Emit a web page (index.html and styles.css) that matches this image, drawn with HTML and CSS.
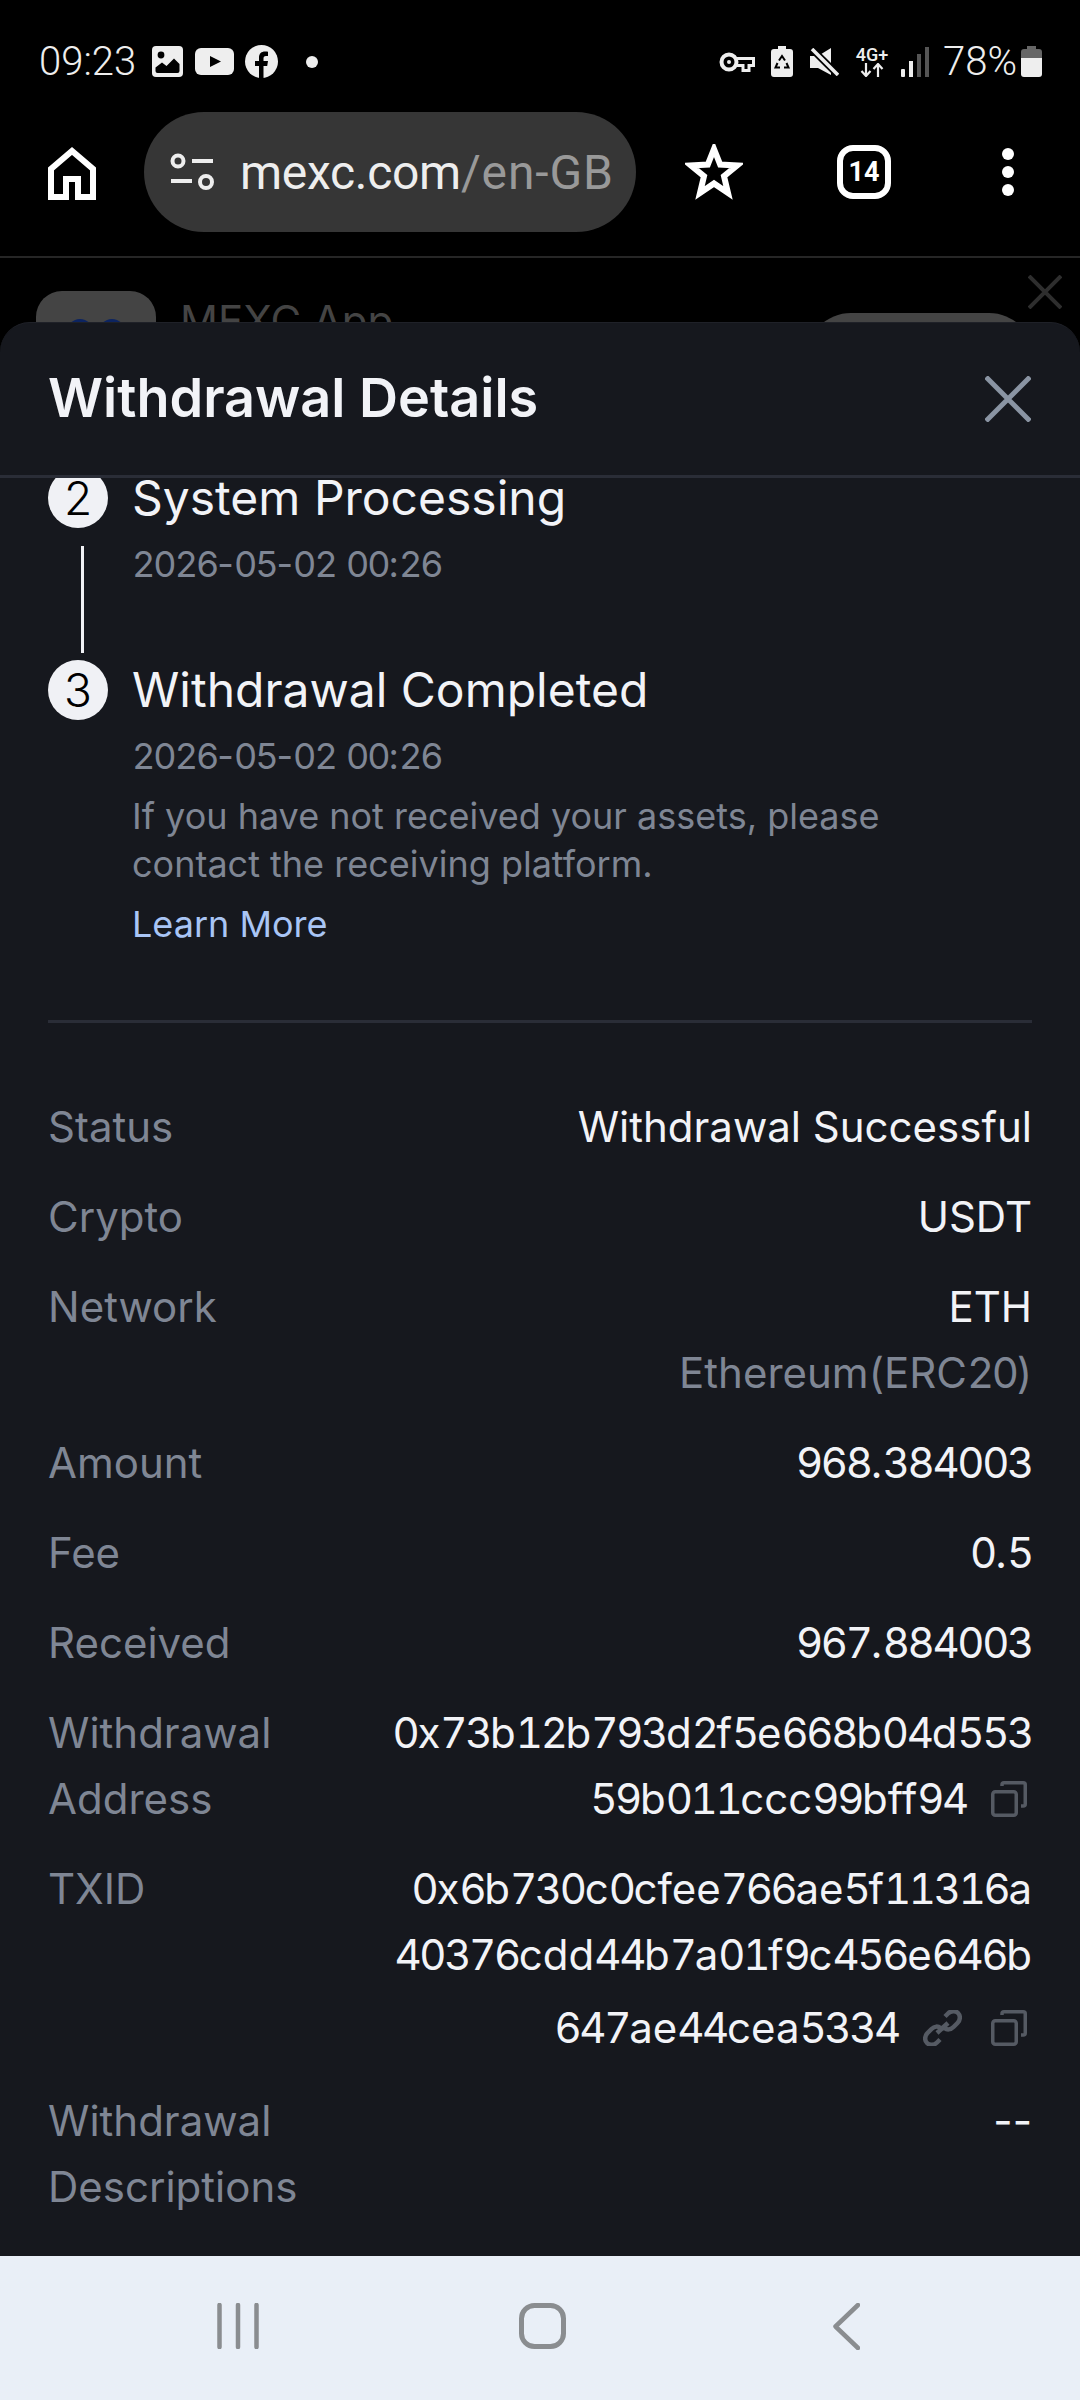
FILE: index.html
```html
<!DOCTYPE html>
<html lang="en-GB">
<head>
<meta charset="utf-8">
<title>Withdrawal Details</title>
<link rel="stylesheet" href="styles.css">
</head>
<body>
<div class="screen">
  <div class="status">
    <div class="status-left">
      <span class="clock">09:23</span>
      <svg class="ic-photo" viewBox="0 0 31 31"><rect width="31" height="31" rx="4" fill="#eee"/><circle cx="9" cy="9" r="3.400" fill="#000"/><path d="M3.500 21.500 10 16.500l4.500 3.500L22 12.500l5.500 5.500V25a2 2 0 0 1-2 2H5.500a2 2 0 0 1-2-2z" fill="#000"/></svg>
      <svg class="ic-yt" viewBox="0 0 39 27"><rect width="39" height="27" rx="6" fill="#eee"/><path d="M15 8 26 13.500 15 19z" fill="#000"/></svg>
      <svg class="ic-fb" viewBox="0 0 33 33"><circle cx="16.500" cy="16.500" r="16.500" fill="#eee"/><path d="M14 33V21H10v-5h4v-3.500C14 8.500 16.500 6.500 20 6.500c1.500 0 3 .2 3 .2v4.300h-2c-2 0-2.500 1.200-2.500 2.300V16H23l-.8 5h-3.700v12z" fill="#000"/></svg>
      <span class="note-dot"></span>
    </div>
    <div class="status-right">
      <svg class="ic-key" viewBox="0 0 36 20"><circle cx="10" cy="10" r="7.500" fill="none" stroke="#eee" stroke-width="4"/><circle cx="10" cy="10" r="2" fill="#eee"/><path d="M17 6.500h17.500v7H30v5h-6v-5h-7" fill="none" stroke="#eee" stroke-width="3"/></svg>
      <svg class="ic-recycle" viewBox="0 0 22 31"><path d="M7 0h8v3h4a3 3 0 0 1 3 3v22a3 3 0 0 1-3 3H3a3 3 0 0 1-3-3V6a3 3 0 0 1 3-3h4z" fill="#eee"/><path d="M8 14.500 11 10l3 4.500M15.500 17l2 4.500h-4.500M9 21.500H4.500l2-4.500" fill="none" stroke="#000" stroke-width="2"/></svg>
      <svg class="ic-mute" viewBox="0 0 29 28"><path d="M0 8h8L21 0v27L8 20H0z" fill="#eee"/><path d="M1 0 29 28" stroke="#000" stroke-width="7"/><path d="M2 1 28 27" stroke="#eee" stroke-width="3.500"/></svg>
      <div class="net">
        <span class="net-label">4G+</span>
        <svg class="ic-arrows" viewBox="0 0 24 14"><path d="M6 0v12M1.500 8 6 13l4.500-5M18 14V2M13.500 6 18 1l4.500 5" fill="none" stroke="#eee" stroke-width="2.200"/></svg>
      </div>
      <svg class="ic-signal" viewBox="0 0 28 30"><rect x="0" y="22" width="4" height="8" rx="1" fill="#eee"/><rect x="8" y="14" width="4" height="16" fill="#eee"/><rect x="16" y="7" width="4" height="23" fill="#555"/><rect x="24" y="0" width="4" height="30" fill="#555"/></svg>
      <span class="pct">78%</span>
      <svg class="ic-batt" viewBox="0 0 21 31"><path d="M6 0h9v3h3a3 3 0 0 1 3 3v6H0V6a3 3 0 0 1 3-3h3z" fill="#666"/><path d="M0 12h21v16a3 3 0 0 1-3 3H3a3 3 0 0 1-3-3z" fill="#eee"/></svg>
    </div>
  </div>

  <div class="toolbar">
    <svg class="ic-home" viewBox="0 0 48 54"><path d="M3 51V23L24 5l21 18v28H30V33H18v18z" fill="none" stroke="#fff" stroke-width="6"/></svg>
    <div class="url">
      <svg class="ic-tune" viewBox="0 0 44 38"><circle cx="8" cy="8" r="5.500" fill="none" stroke="#eee" stroke-width="4"/><path d="M22 8h21M1 28h21" stroke="#eee" stroke-width="4"/><circle cx="36" cy="29" r="6" fill="none" stroke="#eee" stroke-width="4"/></svg>
      <span class="url-text">mexc.com<span class="url-path">/en-GB</span></span>
    </div>
    <svg class="ic-star" viewBox="-29 -29 58 58"><path d="M0-24 6.200-8.500 23-7.500 10 3.200 14 20 0 10.500-14 20-10 3.200-23-7.500-6.200-8.500z" fill="none" stroke="#fff" stroke-width="6"/></svg>
    <div class="tabs">14</div>
    <div class="menu"><span></span><span></span><span></span></div>
  </div>

  <div class="web">
    <div class="banner">
      <div class="app-icon"><span></span><span></span></div>
      <div class="app-name">MEXC App</div>
      <div class="app-btn"></div>
    </div>
    <svg class="banner-close" viewBox="0 0 34 34"><path d="M1 1 33 33M33 1 1 33" stroke="#2e2e2e" stroke-width="4"/></svg>

    <section class="sheet">
      <header class="sheet-head">
        <h1 class="sheet-title">Withdrawal Details</h1>
        <svg class="ic-close" viewBox="0 0 46 46"><path d="M1 1 45 45M45 1 1 45" stroke="#8a94a3" stroke-width="5"/></svg>
      </header>
      <div class="sheet-body">
        <div class="step">
          <div class="step-rail">
            <div class="step-num">2</div>
            <div class="step-line"></div>
          </div>
          <div class="step-main">
            <div class="step-title">System Processing</div>
            <div class="step-note step-date"><span class="d">2026</span>-<span class="d">05</span>-<span class="d">02</span> <span class="d">00</span>:<span class="d">26</span></div>
          </div>
        </div>
        <div class="step">
          <div class="step-rail">
            <div class="step-num">3</div>
          </div>
          <div class="step-main">
            <div class="step-title">Withdrawal Completed</div>
            <div class="step-note step-date"><span class="d">2026</span>-<span class="d">05</span>-<span class="d">02</span> <span class="d">00</span>:<span class="d">26</span></div>
            <div class="step-note step-desc">If you have not received your assets, please<br>contact the receiving platform.</div>
            <div class="step-note step-link">Learn More</div>
          </div>
        </div>
        <div class="divider"></div>
        <div class="rows">
          <div class="row"><div class="label">Status</div><div class="value">Withdrawal Successful</div></div>
          <div class="row"><div class="label">Crypto</div><div class="value">USDT</div></div>
          <div class="row"><div class="label">Network</div><div class="value">ETH<div class="muted">Ethereum(ERC<span class="d">20</span>)</div></div></div>
          <div class="row"><div class="label">Amount</div><div class="value"><span class="d">968</span>.<span class="d">384003</span></div></div>
          <div class="row"><div class="label">Fee</div><div class="value"><span class="d">0</span>.<span class="d">5</span></div></div>
          <div class="row"><div class="label">Received</div><div class="value"><span class="d">967</span>.<span class="d">884003</span></div></div>
          <div class="row">
            <div class="label">Withdrawal Address</div>
            <div class="value">
              <div><span class="d">0</span>x<span class="d">73</span>b<span class="d">12</span>b<span class="d">793</span>d<span class="d">2</span>f<span class="d">5</span>e<span class="d">668</span>b<span class="d">04</span>d<span class="d">553</span></div>
              <div class="hash-end"><span><span class="d">59</span>b<span class="d">011</span>ccc<span class="d">99</span>bff<span class="d">94</span></span>
                <svg class="ic-copy" viewBox="0 0 36 36"><rect x="1.750" y="10.750" width="23.500" height="23.500" rx="2.500" fill="none" stroke="#555a63" stroke-width="3.500"/><path d="M11 5V3.750a2 2 0 0 1 2-2h19.250a2 2 0 0 1 2 2V23a2 2 0 0 1-2 2H30" fill="none" stroke="#555a63" stroke-width="3.500"/></svg>
              </div>
            </div>
          </div>
          <div class="row">
            <div class="label">TXID</div>
            <div class="value">
              <div><span class="d">0</span>x<span class="d">6</span>b<span class="d">730</span>c<span class="d">0</span>cfee<span class="d">766</span>ae<span class="d">5</span>f<span class="d">11316</span>a</div>
              <div><span class="d">40376</span>cdd<span class="d">44</span>b<span class="d">7</span>a<span class="d">01</span>f<span class="d">9</span>c<span class="d">456</span>e<span class="d">646</span>b</div>
              <div class="hash-end hash-last"><span><span class="d">647</span>ae<span class="d">44</span>cea<span class="d">5334</span></span>
                <svg class="ic-link" viewBox="0 0 39 36"><path d="M17 29.500l-3 3c-3 3-7.500 3-10 .5s-2.500-7 .5-10l4-4c3-3 6.500-3 9-1M22 6.500l3-3c3-3 7.500-3 10-.5s2.500 7-.5 10l-4 4c-3 3-6.500 3-9 1M14 23 25 13" fill="none" stroke="#555a63" stroke-width="4.500"/></svg>
                <svg class="ic-copy" viewBox="0 0 36 36"><rect x="1.750" y="10.750" width="23.500" height="23.500" rx="2.500" fill="none" stroke="#555a63" stroke-width="3.500"/><path d="M11 5V3.750a2 2 0 0 1 2-2h19.250a2 2 0 0 1 2 2V23a2 2 0 0 1-2 2H30" fill="none" stroke="#555a63" stroke-width="3.500"/></svg>
              </div>
            </div>
          </div>
          <div class="row"><div class="label">Withdrawal Descriptions</div><div class="value">--</div></div>
        </div>
      </div>
    </section>
  </div>

  <nav class="navbar">
    <svg class="nav-recents" viewBox="0 0 42 46"><path d="M2.500 2v42M21 2v42M39.500 2v42" stroke="#8a8d90" stroke-width="4.500" stroke-linecap="round"/></svg>
    <svg class="nav-home" viewBox="0 0 47 46"><rect x="2.500" y="2.500" width="42" height="41" rx="13" fill="none" stroke="#8a8d90" stroke-width="5"/></svg>
    <svg class="nav-back" viewBox="0 0 27 47"><path d="M25 2 2.500 23.500 25 45" fill="none" stroke="#8a8d90" stroke-width="4.500" stroke-linecap="round" stroke-linejoin="round"/></svg>
  </nav>
</div>
</body>
</html>
```
FILE: styles.css
```css
* { box-sizing: border-box; }
html, body { margin: 0; padding: 0; background: #000; }
.screen { width: 1080px; height: 2400px; display: flex; flex-direction: column; overflow: hidden; background: #000; font-family: Inter, "Liberation Sans", sans-serif; }
.d { font-variant-numeric: tabular-nums; letter-spacing: -0.056em; }

.status { height: 84px; padding: 45px 38px 0 39px; display: flex; justify-content: space-between; align-items: flex-start; font-family: Roboto, "Liberation Sans", sans-serif; color: #eee; font-weight: 300; }
.status-left, .status-right { display: flex; align-items: center; height: 33px; }
.clock { font-size: 40px; line-height: 33px; width: 113px; }
.ic-photo { width: 31px; height: 31px; }
.ic-yt { width: 39px; height: 27px; margin-left: 12px; }
.ic-fb { width: 33px; height: 33px; margin-left: 11px; }
.note-dot { width: 12px; height: 12px; border-radius: 50%; background: #eee; margin-left: 28px; }
.ic-key { width: 36px; height: 20px; }
.ic-recycle { width: 22px; height: 31px; margin-left: 16px; }
.ic-mute { width: 29px; height: 28px; margin-left: 17px; }
.net { width: 32px; margin-left: 17px; display: flex; flex-direction: column; align-items: center; }
.net-label { font-size: 18px; line-height: 17px; font-weight: 500; white-space: nowrap; }
.ic-arrows { width: 24px; height: 14px; }
.ic-signal { width: 28px; height: 30px; margin-left: 13px; }
.pct { font-size: 40px; line-height: 33px; margin-left: 14px; width: 70px; white-space: nowrap; }
.ic-batt { width: 21px; height: 31px; margin-left: 8px; }

.toolbar { height: 174px; padding: 28px 0 26px 48px; display: flex; align-items: flex-start; border-bottom: 2px solid #262626; }
.ic-home { width: 48px; height: 54px; margin-top: 34px; }
.url { width: 492px; height: 120px; margin-left: 48px; border-radius: 60px; background: #363636; display: flex; align-items: center; padding-left: 26px; }
.ic-tune { width: 44px; height: 38px; }
.url-text { margin-left: 26px; font-family: Roboto, "Liberation Sans", sans-serif; font-size: 48px; letter-spacing: -0.3px; color: #eee; white-space: nowrap; }
.url-path { color: #999; letter-spacing: 0.9px; }
.ic-star { width: 58px; height: 58px; margin: 32px 0 0 49px; }
.tabs { width: 54px; height: 54px; margin: 33px 0 0 94px; border: 6px solid #fff; border-radius: 16px; color: #fff; font: 700 27px/42px Roboto, sans-serif; text-align: center; }
.menu { width: 12px; margin: 36px 0 0 111px; display: flex; flex-direction: column; gap: 6px; }
.menu span { width: 12px; height: 12px; border-radius: 50%; background: #fff; }

.web { position: relative; flex: 1; min-height: 0; overflow: hidden; }
.banner { display: flex; align-items: flex-start; padding: 33px 46px 0 36px; }
.app-icon { width: 120px; height: 120px; border-radius: 26px; background: #444; display: flex; justify-content: center; gap: 6px; padding-top: 28px; flex: none; }
.app-icon span { width: 26px; height: 26px; border-radius: 50%; background: #0c2461; }
.app-name { margin-left: 24px; font-size: 42px; line-height: 60px; color: #444; flex: 1; }
.app-btn { width: 228px; height: 90px; margin-top: 22px; border-radius: 45px; background: #444; flex: none; }
.banner-close { position: absolute; left: 1028px; top: 17px; width: 34px; height: 34px; }

.sheet { position: absolute; left: 0; right: 0; top: 64px; bottom: 0; background: #16181e; border-radius: 30px 30px 0 0; border-top: 1px solid #1f2128; display: flex; flex-direction: column; color: #f2f3f7; }
.sheet-head { height: 155px; flex: none; display: flex; align-items: center; justify-content: space-between; padding: 0 49px 0 48px; border-bottom: 3px solid #2a2d37; }
.sheet-title { margin: 0 0 3px; font-size: 54px; line-height: 60px; font-weight: 600; color: #f2f3f7; }
.ic-close { width: 46px; height: 46px; }
.sheet-body { flex: 1; min-height: 0; overflow: hidden; padding: 0 48px; }

.step { display: flex; gap: 24px; }
.step:first-child { margin-top: -10px; }
.step-rail { width: 60px; flex: none; }
.step-num { width: 60px; height: 60px; border-radius: 50%; background: #f0f1f5; color: #000; font-size: 46px; line-height: 60px; text-align: center; font-weight: 300; }
.step-line { width: 3px; height: 107px; margin: 18px 0 7px 33px; background: #f0f1f5; }
.step-title { font-size: 48px; line-height: 60px; color: #f2f3f7; }
.step-note { font-size: 36px; line-height: 48px; color: #7f8694; }
.step-date { margin-top: 12px; }
.step-desc { margin-top: 12px; }
.step-link { margin-top: 12px; color: #a9c5f5; }
.divider { height: 3px; margin-top: 72px; background: #2a2d37; }

.rows { display: flex; flex-direction: column; gap: 24px; margin-top: 71px; font-size: 42px; line-height: 66px; }
.row { display: flex; justify-content: space-between; }
.label { width: 250px; flex: none; color: #7f8694; }
.value { text-align: right; color: #f2f3f7; white-space: nowrap; }
.muted { color: #7f8694; }
.hash-end { display: flex; justify-content: flex-end; align-items: center; gap: 24px; }
.hash-last { margin: 7px 0 3px; }
.ic-copy { width: 36px; height: 36px; margin-right: 5px; }
.ic-link { width: 39px; height: 36px; margin-right: 5px; }

.navbar { height: 144px; flex: none; background: #e9eff7; display: flex; align-items: flex-start; padding: 47px 0 0 217px; }
.nav-recents { width: 42px; height: 46px; }
.nav-home { width: 47px; height: 46px; margin-left: 260px; }
.nav-back { width: 27px; height: 47px; margin-left: 267px; }
```
